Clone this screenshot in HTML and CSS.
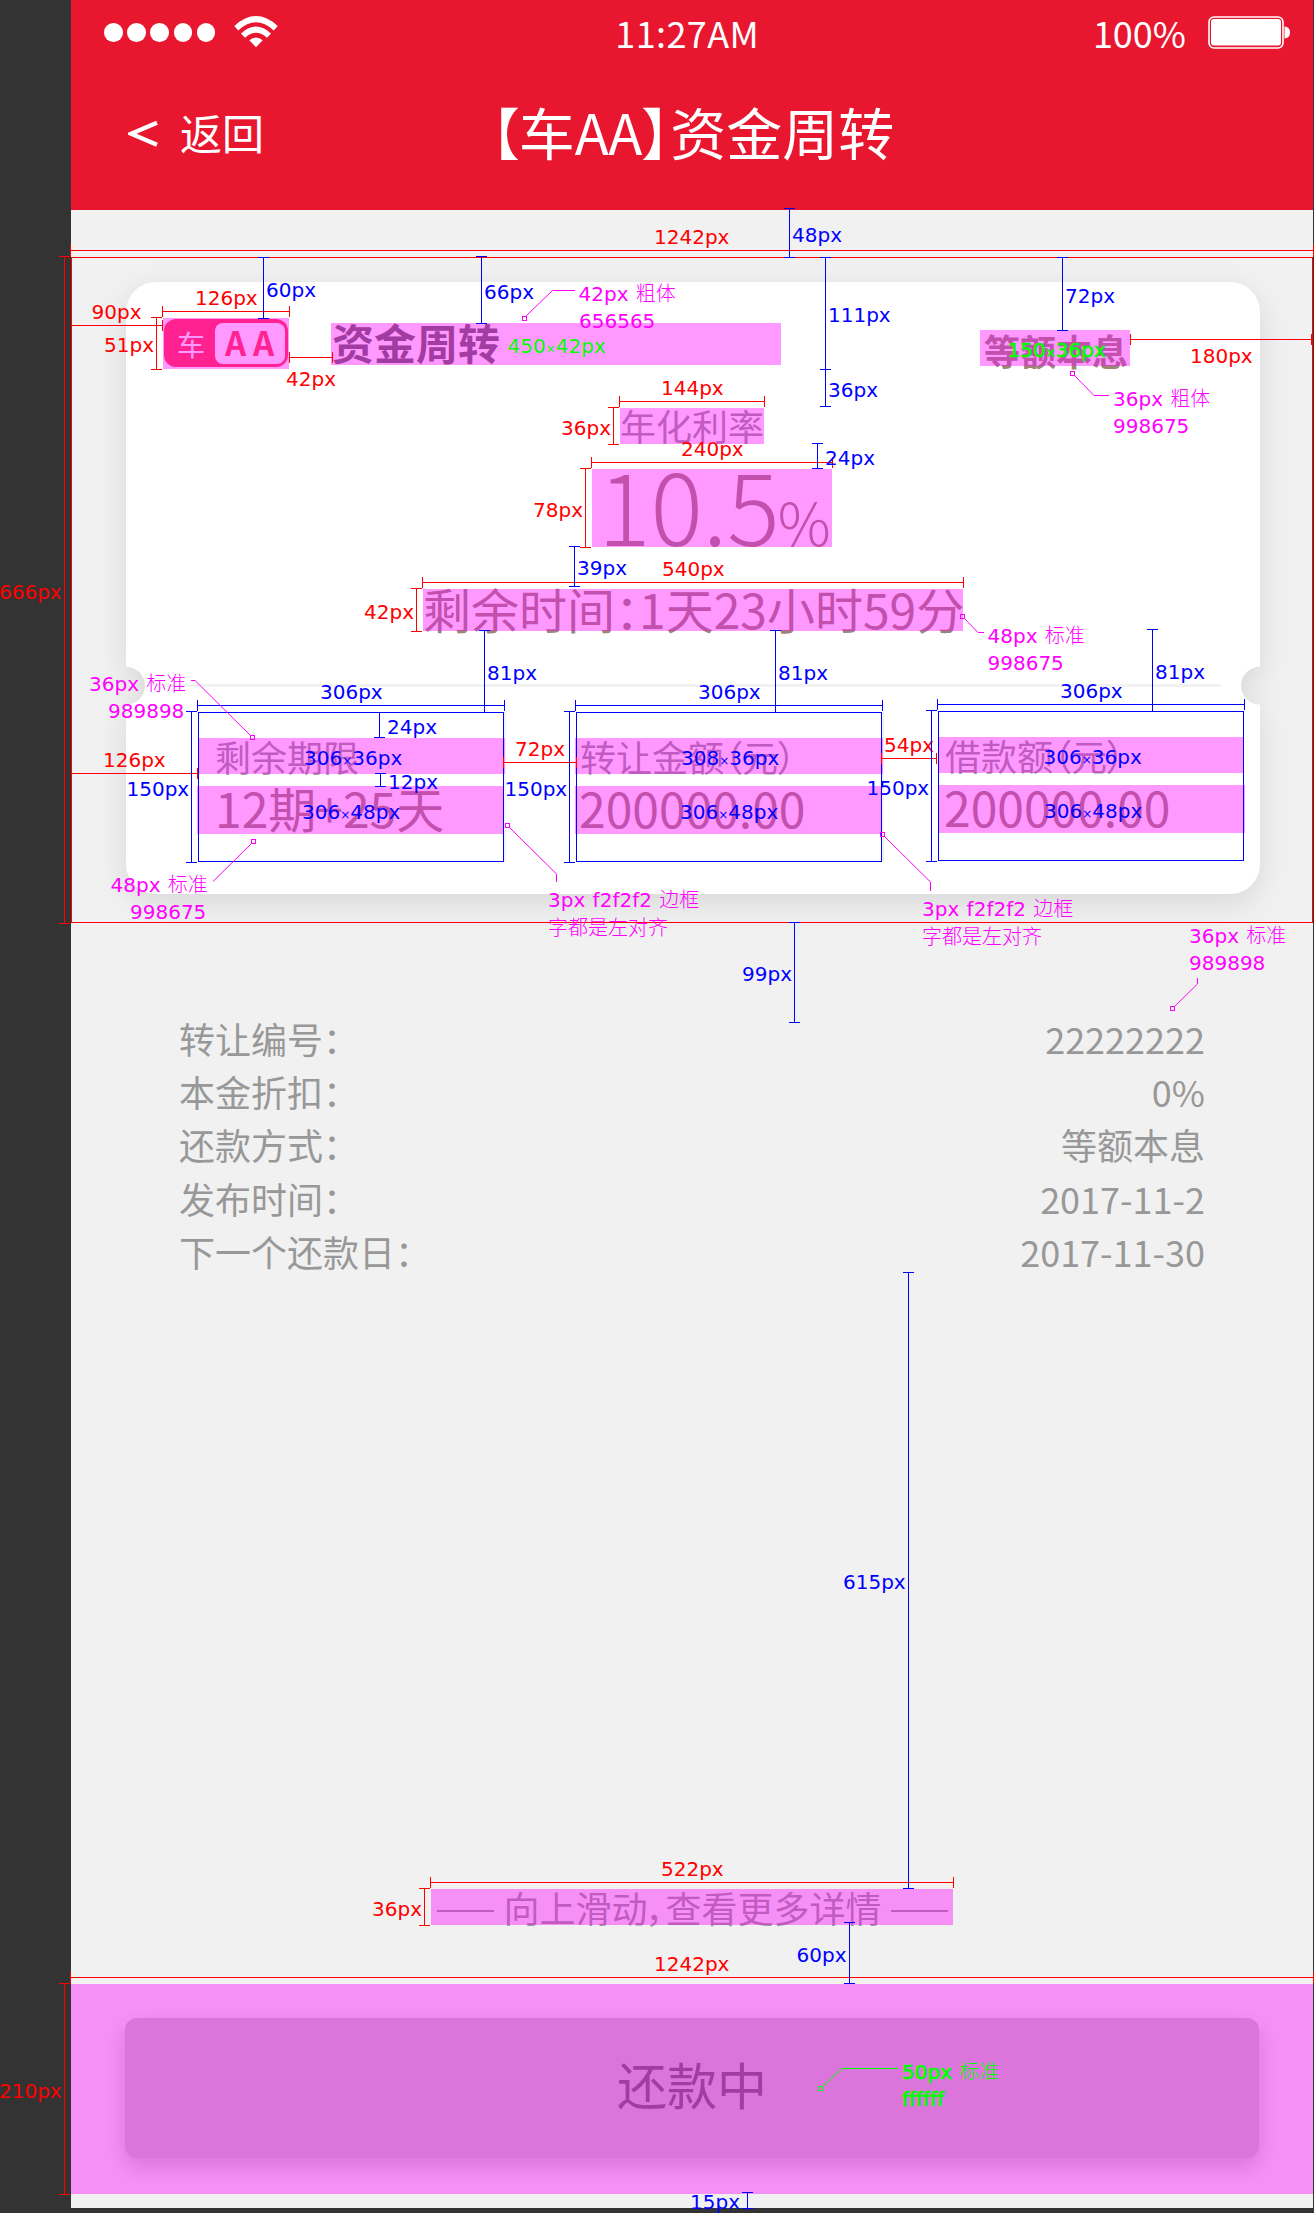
FILE: index.html
```html
<!DOCTYPE html>
<html lang="zh-CN">
<head>
<meta charset="utf-8">
<title>【车AA】资金周转</title>
<link rel="stylesheet" href="styles.css">
</head>
<body>
<main class="phone">
  <header class="header">
    <div class="status">
      <div class="signal"><i></i><i></i><i></i><i></i><i></i>
        <svg class="wifi" width="44" height="32" viewBox="0 0 44 32">
          <g fill="none" stroke="#fff" stroke-width="6">
            <path d="M2.3 12.2 Q22 -5.8 41.7 12.2"/>
            <path d="M9 19.6 Q22 7.6 35 19.6"/>
          </g>
          <path d="M15.3 24.3 Q22 18.6 28.7 24.3 L22 31.3 Z" fill="#fff"/>
        </svg>
      </div>
      <div class="clock">11:27AM</div>
      <div class="power">100%
        <svg class="battery" width="83" height="33" viewBox="0 0 83 33">
          <rect x="1" y="1" width="74" height="31" rx="5" fill="none" stroke="#fff" stroke-width="1.6"/>
          <rect x="3" y="3" width="70" height="26.5" rx="3" fill="#fff"/>
          <path d="M76.5 10.5 Q82 11 82 16.5 T76.5 22.5 Z" fill="#fff"/>
        </svg>
      </div>
    </div>
    <nav class="nav">
      <a class="back"><svg width="30" height="28" viewBox="0 0 30 28"><path d="M29 2.8 L3 13.7 L29 24.7" fill="none" stroke="#fff" stroke-width="4.2"/></svg>返回</a>
      <h1 class="title">【车AA】资金周转</h1>
    </nav>
  </header>

  <section class="card">
    <svg class="card-shape" width="1134" height="612" viewBox="0 0 1134 612">
      <path d="M30 0H1104A30 30 0 0 1 1134 30V384.700A19 19 0 1 0 1134 422.700V582A30 30 0 0 1 1104 612H30A30 30 0 0 1 0 582V422.700A19 19 0 0 0 0 384.700V30A30 30 0 0 1 30 0Z" fill="#fff"/>
    </svg>
    <div class="card-head">
      <div class="badge mark"><span class="badge-body"><span class="badge-kind">车</span><span class="badge-grade">AA</span></span></div>
      <h2 class="name mark">资金周转</h2>
      <div class="method mark">等额本息</div>
    </div>
    <div class="rate-label mark">年化利率</div>
    <div class="rate mark">10.5<small>%</small></div>
    <div class="remain mark">剩余时间：1天23小时59分</div>
    <div class="divider"></div>
    <div class="cells">
      <div class="cell cell-term"><div class="cell-label mark">剩余期限</div><div class="cell-value mark">12期+25天</div></div>
      <div class="cell cell-transfer"><div class="cell-label mark">转让金额（元）</div><div class="cell-value mark">200000.00</div></div>
      <div class="cell cell-loan"><div class="cell-label mark">借款额（元）</div><div class="cell-value mark">200000.00</div></div>
    </div>
  </section>

  <dl class="details">
    <div><dt>转让编号：</dt><dd>22222222</dd></div>
    <div><dt>本金折扣：</dt><dd>0%</dd></div>
    <div><dt>还款方式：</dt><dd>等额本息</dd></div>
    <div><dt>发布时间：</dt><dd>2017-11-2</dd></div>
    <div><dt>下一个还款日：</dt><dd>2017-11-30</dd></div>
  </dl>

  <div class="more mark"><i></i><span>向上滑动，查看更多详情</span><i></i></div>
  <footer class="footer mark"><div class="button">还款中</div></footer>
</main>

<svg class="notes" width="1314" height="2213" viewBox="0 0 1314 2213">
  <g class="red">
    <path d="M70 250.5H1314M70.5 245V256M1313.5 245V256"/>
    <rect x="71.5" y="257.5" width="1241" height="665"/>
    <path d="M64.5 256V924M59 256.5H70M59 923.5H70"/>
    <path d="M71 325.5H163M162.5 320V331"/>
    <path d="M162 311.5H290M162.5 306V317M289.5 306V317"/>
    <path d="M156.5 317V370M151 317.5H162M151 369.5H162"/>
    <path d="M289 357.5H333M289.5 352V363M332.5 352V363"/>
    <path d="M619 401.5H765M619.5 396V407M764.5 396V407"/>
    <path d="M613.5 407V445M608 407.5H619M608 444.5H619"/>
    <path d="M591 462.5H833M591.5 457V468M832.5 457V468"/>
    <path d="M585.5 468V548M580 468.5H591M580 547.5H591"/>
    <path d="M422 582.5H964M422.5 577V588M963.5 577V588"/>
    <path d="M416.5 588V632M411 588.5H422M411 631.5H422"/>
    <path d="M1130 339.5H1312M1130.5 334V345M1311.5 334V345"/>
    <path d="M71 773.5H198M71.5 768V779M197.5 768V779"/>
    <path d="M504 762.5H576M503.5 757V768M576.5 757V768"/>
    <path d="M881 758.5H937M881.5 753V764M936.5 753V764"/>
    <path d="M430 1882.5H954M430.5 1877V1888M953.5 1877V1888"/>
    <path d="M424.5 1888V1926M419 1888.5H430M419 1925.5H430"/>
    <path d="M70 1977.5H1314M70.5 1972V1983M1313.5 1972V1983"/>
    <path d="M64.5 1983V2195M59 1983.5H70M59 2194.5H70"/>
    <text x="654" y="244">1242px</text>
    <text x="-1" y="599">666px</text>
    <text x="91.5" y="319">90px</text>
    <text x="195" y="305">126px</text>
    <text x="104" y="352">51px</text>
    <text x="286" y="386">42px</text>
    <text x="661" y="395">144px</text>
    <text x="561" y="435">36px</text>
    <text x="681" y="456">240px</text>
    <text x="533" y="517">78px</text>
    <text x="662" y="576">540px</text>
    <text x="364" y="619">42px</text>
    <text x="1190" y="363">180px</text>
    <text x="103" y="767">126px</text>
    <text x="515" y="756">72px</text>
    <text x="884" y="752">54px</text>
    <text x="661" y="1876">522px</text>
    <text x="372" y="1916">36px</text>
    <text x="654" y="1971">1242px</text>
    <text x="-1" y="2098">210px</text>
  </g>
  <g class="blue">
    <path d="M789.5 208V258M784 208.5H795M784 257.5H795"/>
    <path d="M263.5 257V319M258 257.5H269M258 318.5H269"/>
    <path d="M481.5 256V324M476 256.5H487M476 323.5H487"/>
    <path d="M825.5 257V407M820 257.5H831M820 369.5H831M820 406.5H831"/>
    <path d="M1062.5 257V331M1057 257.5H1068M1057 330.5H1068"/>
    <path d="M817.5 443V469M812 443.5H823M812 468.5H823"/>
    <path d="M574.5 546V587M569 546.5H580M569 586.5H580"/>
    <path d="M484.5 630V712M479 630.5H490"/>
    <path d="M775.5 630V712M770 630.5H781"/>
    <path d="M1152.5 629V711M1147 629.5H1158"/>
    <path d="M197 705.5H505M197.5 700V711M504.5 700V711"/>
    <path d="M575 705.5H883M575.5 700V711M882.5 700V711"/>
    <path d="M937 704.5H1245M937.5 699V710M1244.5 699V710"/>
    <path d="M191.5 711V863M186 711.5H197M186 862.5H197"/>
    <path d="M569.5 711V863M564 711.5H575M564 862.5H575"/>
    <path d="M931.5 710V862M926 710.5H937M926 861.5H937"/>
    <path d="M379.5 712V738M374 737.5H385"/>
    <path d="M380.5 773V787M375 773.5H386M375 786.5H386"/>
    <path d="M794.5 922V1023M789 922.5H800M789 1022.5H800"/>
    <path d="M908.5 1272V1889M903 1272.5H914M903 1888.5H914"/>
    <path d="M849.5 1922V1984M844 1922.5H855M844 1983.5H855"/>
    <path d="M747.5 2192V2209M742 2192.5H753M742 2208.5H753"/>
    <text x="792" y="242">48px</text>
    <text x="266" y="297">60px</text>
    <text x="484" y="299">66px</text>
    <text x="828" y="322">111px</text>
    <text x="828" y="397">36px</text>
    <text x="1065" y="303">72px</text>
    <text x="825" y="465">24px</text>
    <text x="577" y="575">39px</text>
    <text x="487" y="680">81px</text>
    <text x="778" y="680">81px</text>
    <text x="1155" y="679">81px</text>
    <text x="320" y="699">306px</text>
    <text x="698" y="699">306px</text>
    <text x="1060" y="698">306px</text>
    <text x="126.5" y="796">150px</text>
    <text x="504.5" y="796">150px</text>
    <text x="866.5" y="795">150px</text>
    <text x="387" y="734">24px</text>
    <text x="388" y="789">12px</text>
    <text x="304" y="765">306<tspan class="times">×</tspan>36px</text>
    <text x="681" y="765">308<tspan class="times">×</tspan>36px</text>
    <text x="1043.5" y="764">306<tspan class="times">×</tspan>36px</text>
    <text x="302" y="819">306<tspan class="times">×</tspan>48px</text>
    <text x="680" y="819">306<tspan class="times">×</tspan>48px</text>
    <text x="1044" y="818">306<tspan class="times">×</tspan>48px</text>
    <text x="742" y="981">99px</text>
    <text x="843" y="1589">615px</text>
    <text x="796.5" y="1962">60px</text>
    <text x="690" y="2209">15px</text>
  </g>
  <g class="magenta">
    <path class="slope" d="M526 316L552.5 290.5H575"/><rect x="522.5" y="316.5" width="4" height="4"/>
    <path class="slope" d="M1074 375L1094 395.5H1109"/><rect x="1070.5" y="371.5" width="4" height="4"/>
    <path class="slope" d="M964 618L978 632.5H984"/><rect x="960.5" y="614.5" width="4" height="4"/>
    <path class="slope" d="M191 680.5H195L251 736"/><rect x="250.5" y="735.5" width="4" height="4"/>
    <path class="slope" d="M213 881.5L252 843"/><rect x="251.5" y="839.5" width="4" height="4"/>
    <path class="slope" d="M509 827L556.5 874V882"/><rect x="505.5" y="823.5" width="4" height="4"/>
    <path class="slope" d="M884 836L930.5 882V891"/><rect x="880.5" y="832.5" width="4" height="4"/>
    <path class="slope" d="M1197.5 978V984L1174 1007"/><rect x="1170.5" y="1006.5" width="4" height="4"/>
    <text x="578.5" y="301">42px <tspan class="han">粗体</tspan></text><text x="579" y="328">656565</text>
    <text x="1113" y="406">36px <tspan class="han">粗体</tspan></text><text x="1113" y="433">998675</text>
    <text x="987.5" y="643">48px <tspan class="han">标准</tspan></text><text x="987.5" y="670">998675</text>
    <text x="89" y="691">36px <tspan class="han">标准</tspan></text><text x="108" y="718">989898</text>
    <text x="110.5" y="892">48px <tspan class="han">标准</tspan></text><text x="130" y="919">998675</text>
    <text x="548" y="907">3px f2f2f2 <tspan class="han">边框</tspan></text><text class="han" x="548" y="935">字都是左对齐</text>
    <text x="922" y="916">3px f2f2f2 <tspan class="han">边框</tspan></text><text class="han" x="922" y="944">字都是左对齐</text>
    <text x="1189" y="943">36px <tspan class="han">标准</tspan></text><text x="1189" y="970">989898</text>
  </g>
  <g class="green">
    <path class="slope" d="M822 2087L842 2068.5H898"/><rect x="818.5" y="2086.5" width="4" height="4"/>
    <text x="507.5" y="353">450<tspan class="times">×</tspan>42px</text>
    <text class="strong" x="1007.5" y="357">150<tspan class="times">×</tspan>36px</text>
    <text class="strong" x="902" y="2079">50px <tspan class="han">标准</tspan></text>
    <text class="strong" x="902" y="2106">ffffff</text>
  </g>
</svg>
</body>
</html>
```
FILE: styles.css
```css
* { box-sizing: border-box; margin: 0; padding: 0; font-weight: inherit; }
html, body { background: #333; }
body {
  position: relative;
  width: 1314px;
  height: 2213px;
  overflow: hidden;
  font-family: "Noto Sans CJK SC", sans-serif;
  font-weight: 400;
  font-feature-settings: "palt";
  color: #989898;
  white-space: nowrap;
}
.phone {
  display: flex;
  flex-direction: column;
  width: 1242px;
  height: 2208px;
  margin-left: 71px;
  background: #f1f1f1;
}

/* translucent layer laid over a measured block */
.mark { position: relative; }
.mark::after {
  content: "";
  position: absolute;
  inset: 0;
  background: rgba(255, 0, 255, .4);
}

.header { height: 210px; background: #e9162f; color: #fff; }
.status {
  display: grid;
  grid-template-columns: 1fr auto 1fr;
  height: 65px;
  padding: 0 22.5px 0 33px;
  font-size: 36px;
  line-height: 65px;
}
.signal { display: flex; align-items: center; gap: 4.5px; }
.signal i { width: 18.7px; height: 18.7px; border-radius: 50%; background: #fff; }
.wifi { margin-left: 14px; margin-top: -2px; }
.clock { margin-left: -20px; letter-spacing: .4px; }
.power { display: flex; align-items: center; justify-content: flex-end; gap: 21.5px; }
.nav {
  position: relative;
  display: grid;
  grid-template-columns: 1fr auto 1fr;
  align-items: center;
  height: 132px;
  padding-left: 57px;
}
.back { display: flex; align-items: center; gap: 22px; padding-top: 1px; font-size: 42px; line-height: 60px; }
.back svg { margin-top: 4px; }
.title { font-size: 56px; line-height: 80px; margin-left: -56px; }

.card {
  position: relative;
  display: flex;
  flex-direction: column;
  width: 1134px;
  height: 612px;
  margin: 72px 0 0 55px;
  padding-top: 36px;
}
.card-shape {
  position: absolute;
  left: 0;
  top: 0;
  overflow: visible;
  filter: drop-shadow(0 9px 15px rgba(0, 0, 0, .1));
}
.card-head { display: flex; height: 51px; padding-left: 37px; }
.badge { width: 126px; height: 51px; padding: 1px; }
.badge-body {
  display: flex;
  align-items: center;
  width: 124px;
  height: 48px;
  padding: 4px 3px 3px 0;
  border-radius: 12px;
  background: #ff3a46;
  color: #fff;
}
.badge-kind { width: 51px; padding-left: 13px; font-size: 28px; line-height: 40px; }
.badge-grade {
  width: 70px;
  height: 41px;
  padding-left: 10px;
  border-radius: 8px;
  background: #fff;
  color: #ff3a46;
  font-size: 33px;
  font-weight: 700;
  line-height: 39px;
  letter-spacing: 7px;
}
.name { width: 450px; height: 42px; margin: 5px 0 0 42px; padding-left: 1px; color: #656565; font-size: 42px; font-weight: 700; line-height: 38px; }
.method { width: 150px; height: 36px; margin: 12px 0 0 199px; padding-left: 4px; color: #998675; font-size: 36px; font-weight: 700; line-height: 41px; }
.rate-label { width: 144px; height: 36px; margin: 39px 0 0 494px; font-size: 36px; line-height: 34px; }
.rate {
  display: flex;
  align-items: baseline;
  width: 240px;
  height: 78px;
  margin: 25px 0 0 466px;
  padding-left: 6px;
  color: #998675;
  font-size: 98px;
  font-weight: 300;
  line-height: 68px;
}
.rate small { font-size: 59px; margin-left: -2px; }
.remain { width: 540px; height: 42px; margin: 42px 0 0 297px; color: #998675; font-size: 48px; line-height: 39px; }
.divider { width: 1056px; height: 3px; margin: 53px 0 0 39px; background: #f2f2f2; position: relative; }

.cells { display: flex; margin: 25px 0 0 72px; }
.cell { position: relative; width: 306px; height: 150px; padding-top: 26px; box-shadow: 2px 0 #f2f2f2; }
.cell::after { content: ""; position: absolute; inset: 0; border: 1px solid #00f; }
.cell-label { height: 36px; font-size: 36px; line-height: 36px; }
.cell-value { height: 48px; margin-top: 12px; color: #998675; font-size: 48px; line-height: 42px; }
.cell-term .cell-label { width: 307px; padding-left: 17px; }
.cell-term .cell-value { margin-left: -1px; padding-left: 18px; }
.cell-transfer { margin-left: 72px; }
.cell-transfer .cell-label { width: 308px; margin-left: -1px; padding-left: 5px; }
.cell-transfer .cell-value { margin-left: -1px; padding-left: 4px; }
.cell-loan { margin: -1px 0 0 56px; box-shadow: none; }
.cell-loan .cell-label { width: 305px; margin-left: 1px; padding-left: 6px; }
.cell-loan .cell-value { width: 306px; margin-left: 1px; padding-left: 5px; }

.details { margin: 118px 108px 0; font-size: 36px; line-height: 53.2px; }
.details div { display: flex; justify-content: space-between; }

.more {
  display: flex;
  align-items: center;
  justify-content: space-between;
  width: 522px;
  height: 36px;
  margin: 611px 0 0 360px;
  padding: 0 5px 0 6px;
  font-size: 36px;
  line-height: 34px;
}
.more i { width: 57px; height: 2px; margin-top: 8px; background: #989898; }

.footer { height: 210px; margin-top: 59px; padding: 34px 54px 0; }
.button {
  width: 1134px;
  height: 140px;
  border-radius: 12px;
  background: #c3c3c3;
  box-shadow: 0 9px 21px rgba(0, 0, 0, .2);
  color: #656565;
  font-size: 50px;
  line-height: 130px;
  text-align: center;
}

.notes {
  position: absolute;
  left: 0;
  top: 0;
  font-family: "DejaVu Sans", "Noto Sans CJK SC", sans-serif;
  font-size: 20px;
  font-weight: 400;
  font-feature-settings: "liga" 0;
}
.notes path, .notes rect { fill: none; stroke: currentColor; stroke-width: 1; shape-rendering: crispEdges; }
.notes path.slope { shape-rendering: auto; }
.notes text { fill: currentColor; white-space: pre; word-spacing: 1px; }
.han { font-weight: 300; stroke: none; }
.times { font-size: 12px; }
.strong { stroke: currentColor; stroke-width: .7px; }
.red { color: #f00; }
.blue { color: #00f; }
.magenta { color: #f0f; }
.green { color: #0f0; }
```
